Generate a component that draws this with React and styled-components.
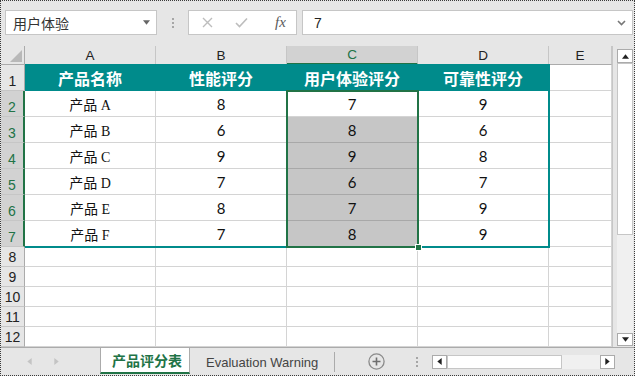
import React from "react";
import styled, { createGlobalStyle } from "styled-components";

const GlobalStyle = createGlobalStyle`
  html, body {
    margin: 0;
    padding: 0;
    background: #ffffff;
  }
  * {
    box-sizing: border-box;
  }
`;

const GREEN = "#217346";
const TEAL = "#008b8b";

const Window = styled.div`
  width: 635px;
  height: 376px;
  border: 1px dotted #3a3a3a;
  background: #e6e6e6;
  display: flex;
  flex-direction: column;
  overflow: hidden;
  font-family: "Noto Sans", "Noto Sans CJK SC", sans-serif;
`;

// formula bar row
const Toolbar = styled.div`
  height: 45px;
  flex: none;
  display: flex;
  align-items: flex-start;
  padding: 9px 0 0 4px;
`;

const NameBox = styled.div`
  width: 152px;
  height: 25px;
  background: #fff;
  border: 1px solid #c6c6c6;
  display: flex;
  align-items: center;
  justify-content: space-between;
  padding: 0 6px 0 7px;
  font-family: "Noto Sans CJK SC", sans-serif;
  font-size: 14px;
  color: #333;
`;

const Grip = styled.div`
  width: 31px;
  height: 25px;
  display: flex;
  flex-direction: column;
  align-items: center;
  justify-content: center;
  gap: 2px;

  span {
    width: 2px;
    height: 2px;
    background: #a6a6a6;
  }
`;

const FxBox = styled.div`
  width: 109px;
  height: 25px;
  background: #fff;
  border: 1px solid #c6c6c6;
  display: flex;
  align-items: center;
  padding-left: 13px;
  gap: 22px;

  .fx {
    font-family: "Liberation Serif", serif;
    font-style: italic;
    font-size: 15px;
    color: #5a5a5a;
    margin-left: 5px;
  }
`;

const FormulaInput = styled.div`
  flex: 1;
  height: 25px;
  margin: 0 1px 0 5px;
  background: #fff;
  border: 1px solid #c6c6c6;
  display: flex;
  align-items: center;
  justify-content: space-between;
  padding: 0 6px 0 11px;
  font-family: "Liberation Sans", sans-serif;
  font-size: 14px;
  color: #222;
`;

const SheetArea = styled.div`
  height: 301px;
  flex: none;
  display: flex;
`;

const Grid = styled.div`
  width: 612px;
  display: grid;
  grid-template-columns: 24px repeat(4, 131px) 63px;
  grid-template-rows: 19px repeat(7, 26px) repeat(5, 20px);
  background: #fff;
  border-right: 1px solid #c6c6c6;
`;

const Corner = styled.div`
  grid-row: 1;
  grid-column: 1;
  background: #e6e6e6;
  border-right: 1px solid #ababab;
  border-bottom: 1px solid #ababab;
  display: flex;
  align-items: flex-end;
  justify-content: flex-end;
  padding: 0 2px 2px 0;
`;

const ColHeader = styled.div`
  grid-row: 1;
  grid-column: ${(p) => p.$c};
  background: ${(p) => (p.$sel ? "#d2d2d2" : "#e6e6e6")};
  color: ${(p) => (p.$sel ? GREEN : "#222")};
  border-right: 1px solid #c6c6c6;
  border-bottom: ${(p) => (p.$sel ? `2px solid ${GREEN}` : "1px solid #ababab")};
  display: flex;
  align-items: center;
  justify-content: center;
  font-family: "Liberation Sans", sans-serif;
  font-size: 13.5px;
`;

const RowHeader = styled.div`
  grid-row: ${(p) => p.$r};
  grid-column: 1;
  background: ${(p) => (p.$sel ? "#d2d2d2" : "#e6e6e6")};
  color: ${(p) => (p.$sel ? GREEN : "#222")};
  border-right: ${(p) => (p.$sel ? `2px solid ${GREEN}` : "1px solid #ababab")};
  border-bottom: 1px solid #c6c6c6;
  display: flex;
  align-items: flex-end;
  justify-content: center;
  padding-bottom: 1px;
  font-family: "Liberation Sans", sans-serif;
  font-size: 14px;
`;

const Cell = styled.div`
  grid-row: ${(p) => p.$r};
  grid-column: ${(p) => p.$c};
  background: ${(p) => p.$bg || "#fff"};
  border-right: 1px solid ${(p) => p.$line || "#d4d4d4"};
  border-bottom: 1px solid ${(p) => p.$line || "#d4d4d4"};
  display: flex;
  align-items: center;
  justify-content: center;
  color: #111;
  font-family: "Lato", "Liberation Sans", sans-serif;
  font-size: 15px;
`;

const TitleCell = styled(Cell)`
  color: #fff;
  font-weight: bold;
  font-family: "Noto Sans CJK SC", sans-serif;
  font-size: 16px;
`;

const TextCell = styled(Cell)`
  font-family: "Liberation Serif", "Noto Sans CJK SC", serif;
  font-size: 14px;
`;

// borders drawn over the cells (table outline, selection)
const Frame = styled.div`
  grid-row: ${(p) => p.$rows};
  grid-column: ${(p) => p.$cols};
  border: 2px solid ${(p) => p.$color};
  border-left-width: ${(p) => (p.$noLeft ? "0" : "2px")};
  margin: -1px -1px -1px ${(p) => (p.$noLeft ? "0" : "-1px")};
  position: relative;
  pointer-events: none;
  z-index: ${(p) => p.$z || 1};
`;

const Handle = styled.div`
  position: absolute;
  right: -5px;
  bottom: -5px;
  width: 7px;
  height: 7px;
  background: ${GREEN};
  border: 1px solid #fff;
`;

const VScroll = styled.div`
  width: 16px;
  margin-left: 4px;
  padding: 3px 0 1px;
  display: flex;
  flex-direction: column;
`;

const Track = styled.div`
  flex: 1;
  background: #f0f0f0;
  display: flex;
  flex-direction: column;
`;

const ScrollBtn = styled.div`
  flex: none;
  width: ${(p) => p.$w || "16px"};
  height: ${(p) => p.$h || "14px"};
  background: #fff;
  border: 1px solid #ababab;
  display: flex;
  align-items: center;
  justify-content: center;
`;

const Thumb = styled.div`
  flex: none;
  background: #fff;
  border: 1px solid #c6c6c6;
  width: ${(p) => p.$w || "100%"};
  height: ${(p) => p.$h || "100%"};
`;

const Spacer = styled.div`
  flex: 1;
`;

const TabBar = styled.div`
  flex: 1;
  display: flex;
  align-items: center;
  border-top: 1px solid #ababab;
`;

const NavArea = styled.div`
  width: 99px;
  align-self: stretch;
  display: flex;
  align-items: center;
  padding-left: 26px;
  gap: 22px;
`;

const Tab = styled.div`
  align-self: flex-start;
  height: 26px;
  display: flex;
  align-items: center;
  background: ${(p) => (p.$active ? "#fff" : "transparent")};
  border-left: ${(p) => (p.$active ? "1px solid #ababab" : "none")};
  border-right: ${(p) => (p.$active ? "1px solid #ababab" : "none")};
  border-bottom: ${(p) => (p.$active ? `2px solid ${GREEN}` : "none")};
  width: ${(p) => p.$w};
  padding-left: ${(p) => (p.$active ? "11px" : "16px")};
  padding-top: ${(p) => (p.$active ? "0" : "2px")};
  color: ${(p) => (p.$active ? GREEN : "#444")};
  font-weight: ${(p) => (p.$active ? "bold" : "normal")};
  font-family: ${(p) =>
    p.$active
      ? '"Noto Sans CJK SC", sans-serif'
      : '"Liberation Sans", sans-serif'};
  font-size: ${(p) => (p.$active ? "14px" : "13px")};
`;

const Separator = styled.div`
  width: 1px;
  height: 20px;
  background: #ababab;
`;

const AddButton = styled.div`
  margin-left: 33px;
  width: 17px;
  height: 17px;
  display: flex;
`;

const Dots = styled(Grip)`
  width: 3px;
  height: 14px;
  margin-left: 30px;
`;

const HScroll = styled.div`
  margin-left: 14px;
  width: 183px;
  height: 14px;
  display: flex;
  background: #f0f0f0;
`;

const Tri = ({ dir, color = "#222", size = 7 }) => {
  const pts = {
    up: "0,5 4,0 8,5",
    down: "0,0 8,0 4,5",
    left: "5,0 5,8 0,4",
    right: "0,0 0,8 5,4",
  }[dir];
  const horiz = dir === "left" || dir === "right";
  return (
    <svg
      width={horiz ? 5 : size}
      height={horiz ? size : 5}
      viewBox={horiz ? "0 0 5 8" : "0 0 8 5"}
    >
      <polygon points={pts} fill={color} />
    </svg>
  );
};

const headers = ["产品名称", "性能评分", "用户体验评分", "可靠性评分"];
const rows = [
  ["产品 A", 8, 7, 9],
  ["产品 B", 6, 8, 6],
  ["产品 C", 9, 9, 8],
  ["产品 D", 7, 6, 7],
  ["产品 E", 8, 7, 9],
  ["产品 F", 7, 8, 9],
];
const letters = ["A", "B", "C", "D", "E"];

export default function App() {
  return (
    <>
      <GlobalStyle />
      <Window>
        <Toolbar>
          <NameBox>
            <span>用户体验</span>
            <Tri dir="down" color="#666" />
          </NameBox>
          <Grip>
            <span />
            <span />
            <span />
          </Grip>
          <FxBox>
            <svg width="11" height="11" viewBox="0 0 11 11">
              <path d="M1 1 L10 10 M10 1 L1 10" stroke="#bdbdbd" strokeWidth="1.4" />
            </svg>
            <svg width="13" height="11" viewBox="0 0 13 11">
              <path d="M1 6 L4.5 9.5 L12 1.5" stroke="#bdbdbd" strokeWidth="1.6" fill="none" />
            </svg>
            <span className="fx">fx</span>
          </FxBox>
          <FormulaInput>
            <span>7</span>
            <svg width="9" height="6" viewBox="0 0 9 6">
              <path d="M1 1 L4.5 4.5 L8 1" stroke="#777" strokeWidth="1.6" fill="none" />
            </svg>
          </FormulaInput>
        </Toolbar>

        <SheetArea>
          <Grid>
            <Corner>
              <svg width="12" height="12" viewBox="0 0 12 12">
                <polygon points="12,0 12,12 0,12" fill="#b8b8b8" />
              </svg>
            </Corner>
            {letters.map((l, i) => (
              <ColHeader key={l} $c={i + 2} $sel={l === "C"}>
                {l}
              </ColHeader>
            ))}

            {/* row 1: table title row */}
            <RowHeader $r={2}>1</RowHeader>
            {headers.map((h, i) => (
              <TitleCell key={h} $r={2} $c={i + 2} $bg={TEAL} $line={TEAL}>
                {h}
              </TitleCell>
            ))}
            <Cell $r={2} $c={6} />

            {rows.map((row, ri) => {
              const r = ri + 3;
              return (
                <React.Fragment key={ri}>
                  <RowHeader $r={r} $sel>
                    {ri + 2}
                  </RowHeader>
                  <TextCell $r={r} $c={2}>
                    {row[0]}
                  </TextCell>
                  <Cell $r={r} $c={3}>
                    {row[1]}
                  </Cell>
                  <Cell
                    $r={r}
                    $c={4}
                    $bg={ri > 0 ? "#c6c6c6" : "#fff"}
                    $line={ri > 0 ? "#a8a8a8" : undefined}
                  >
                    {row[2]}
                  </Cell>
                  <Cell $r={r} $c={5}>
                    {row[3]}
                  </Cell>
                  <Cell $r={r} $c={6} />
                </React.Fragment>
              );
            })}

            {[8, 9, 10, 11, 12].map((n) => (
              <React.Fragment key={n}>
                <RowHeader $r={n + 1}>{n}</RowHeader>
                {[2, 3, 4, 5, 6].map((c) => (
                  <Cell key={c} $r={n + 1} $c={c} />
                ))}
              </React.Fragment>
            ))}

            <Frame $rows="2 / 9" $cols="2 / 6" $color={TEAL} $noLeft />
            <Frame $rows="3 / 9" $cols="4 / 5" $color={GREEN} $z={2}>
              <Handle />
            </Frame>
          </Grid>

          <VScroll>
            <ScrollBtn $h="14px">
              <Tri dir="up" />
            </ScrollBtn>
            <Track>
              <Thumb $h="172px" />
              <Spacer />
              <ScrollBtn $h="13px">
                <Tri dir="down" />
              </ScrollBtn>
            </Track>
          </VScroll>
        </SheetArea>

        <TabBar>
          <NavArea>
            <Tri dir="left" color="#c4c4c4" />
            <Tri dir="right" color="#c4c4c4" />
          </NavArea>
          <Tab $active $w="90px">
            产品评分表
          </Tab>
          <Tab $w="144px">Evaluation Warning</Tab>
          <Separator />
          <AddButton>
            <svg width="17" height="17" viewBox="0 0 17 17">
              <circle cx="8.5" cy="8.5" r="7.6" stroke="#8a8a8a" strokeWidth="1.3" fill="none" />
              <path d="M8.5 4.5 V12.5 M4.5 8.5 H12.5" stroke="#6e6e6e" strokeWidth="1.6" />
            </svg>
          </AddButton>
          <Dots>
            <span />
            <span />
            <span />
          </Dots>
          <HScroll>
            <ScrollBtn $w="15px">
              <Tri dir="left" />
            </ScrollBtn>
            <Thumb $w="115px" />
            <Spacer />
            <ScrollBtn $w="15px">
              <Tri dir="right" />
            </ScrollBtn>
          </HScroll>
        </TabBar>
      </Window>
    </>
  );
}
